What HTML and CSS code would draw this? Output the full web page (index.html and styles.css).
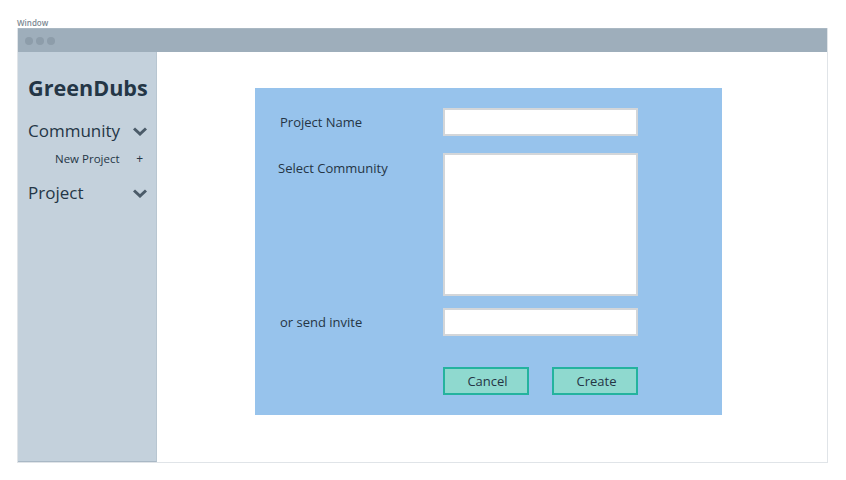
FILE: index.html
```html
<!DOCTYPE html>
<html>
<head>
<meta charset="utf-8">
<link rel="stylesheet" href="styles.css">
</head>
<body>
<div class="page">
  <div class="win-label">Window</div>
  <div class="window">
    <div class="titlebar">
      <span class="dot"></span><span class="dot"></span><span class="dot"></span>
    </div>
    <div class="content">
      <aside class="sidebar">
        <div class="brand">GreenDubs</div>
        <div class="nav-item nav-first">
          <span>Community</span>
          <svg class="chev" width="14" height="9" viewBox="0 0 14 9"><path d="M1 1.5 L7 7 L13 1.5" fill="none" stroke="#4b5b69" stroke-width="3"/></svg>
        </div>
        <div class="sub-item"><span>New Project</span><span class="plus">+</span></div>
        <div class="nav-item">
          <span>Project</span>
          <svg class="chev" width="14" height="9" viewBox="0 0 14 9"><path d="M1 1.5 L7 7 L13 1.5" fill="none" stroke="#4b5b69" stroke-width="3"/></svg>
        </div>
      </aside>
      <main class="main">
        <div class="panel">
          <label class="lbl lbl-mid">Project Name</label>
          <div class="field"></div>
          <label class="lbl lbl-top row2">Select Community</label>
          <div class="field field-tall row2"></div>
          <label class="lbl lbl-mid row3">or send invite</label>
          <div class="field row3"></div>
          <div class="row4"></div>
          <div class="buttons row4">
            <button class="btn">Cancel</button>
            <button class="btn">Create</button>
          </div>
        </div>
      </main>
    </div>
  </div>
</div>
</body>
</html>
```

FILE: styles.css
```css
* { box-sizing: border-box; }
html, body { margin: 0; padding: 0; background: #ffffff; }
body { font-family: "Open Sans", "Noto Sans", sans-serif; color: #2a3a4a; }

.page { padding: 17px 0 0 17px; width: 846px; height: 480px; }

.win-label {
  font-size: 8px;
  line-height: 11px;
  color: #7a8791;
  font-weight: 600;
}

.window {
  width: 811px;
  height: 435px;
  border: 1px solid #e0e4e8;
  border-top: none;
  display: flex;
  flex-direction: column;
}

.titlebar {
  height: 24px;
  background: #9eaebb;
  border-top: 1px solid #aab8c3;
  display: flex;
  align-items: center;
  gap: 3px;
  padding-left: 7px;
  flex: none;
}
.dot {
  width: 8px;
  height: 8px;
  border-radius: 50%;
  background: #8d9daa;
}

.content { flex: 1; display: flex; }

.sidebar {
  width: 139px;
  background: #c4d1dc;
  border-right: 1px solid #b8c6d1;
  border-bottom: 1px solid #a9b8c5;
  padding: 23px 0 0 10px;
  flex: none;
}
.brand {
  font-size: 21.6px;
  font-weight: 700;
  color: #243646;
  line-height: 26px;
}
.nav-item {
  display: flex;
  align-items: center;
  justify-content: space-between;
  width: 120px;
  font-size: 17px;
  line-height: 24px;
  color: #243646;
}
.nav-first { margin-top: 18px; }
.chev { margin-right: 1px; }
.sub-item {
  display: flex;
  justify-content: space-between;
  width: 115px;
  padding-left: 27px;
  font-size: 11.5px;
  line-height: 16px;
  margin: 8px 0 14px;
  color: #243646;
}
.plus { font-size: 12px; }

.main {
  flex: 1;
  padding: 36px 0 0 98px;
}

.panel {
  width: 467px;
  height: 327px;
  background: #97c3ec;
  padding: 20px 84px 20px 25px;
  display: grid;
  grid-template-columns: 163px 195px;
  grid-template-rows: 28px auto auto auto;
  align-content: start;
}
.row2 { margin-top: 17px; }
.row3 { margin-top: 12px; }
.row4 { margin-top: 31px; }

.lbl {
  font-size: 13px;
  color: #253545;
}
.lbl-mid { align-self: center; }
.lbl-top { padding-top: 6px; margin-left: -2px; }

.field {
  height: 28px;
  background: #ffffff;
  border: 2px solid #d3d6d9;
}
.field-tall { height: 143px; }

.buttons {
  display: flex;
  justify-content: space-between;
}
.btn {
  width: 86px;
  height: 28px;
  background: #8fd9cf;
  border: 2px solid #24b39e;
  font-family: inherit;
  font-size: 13px;
  color: #253545;
  padding: 0 0 0 3px;
}
```
